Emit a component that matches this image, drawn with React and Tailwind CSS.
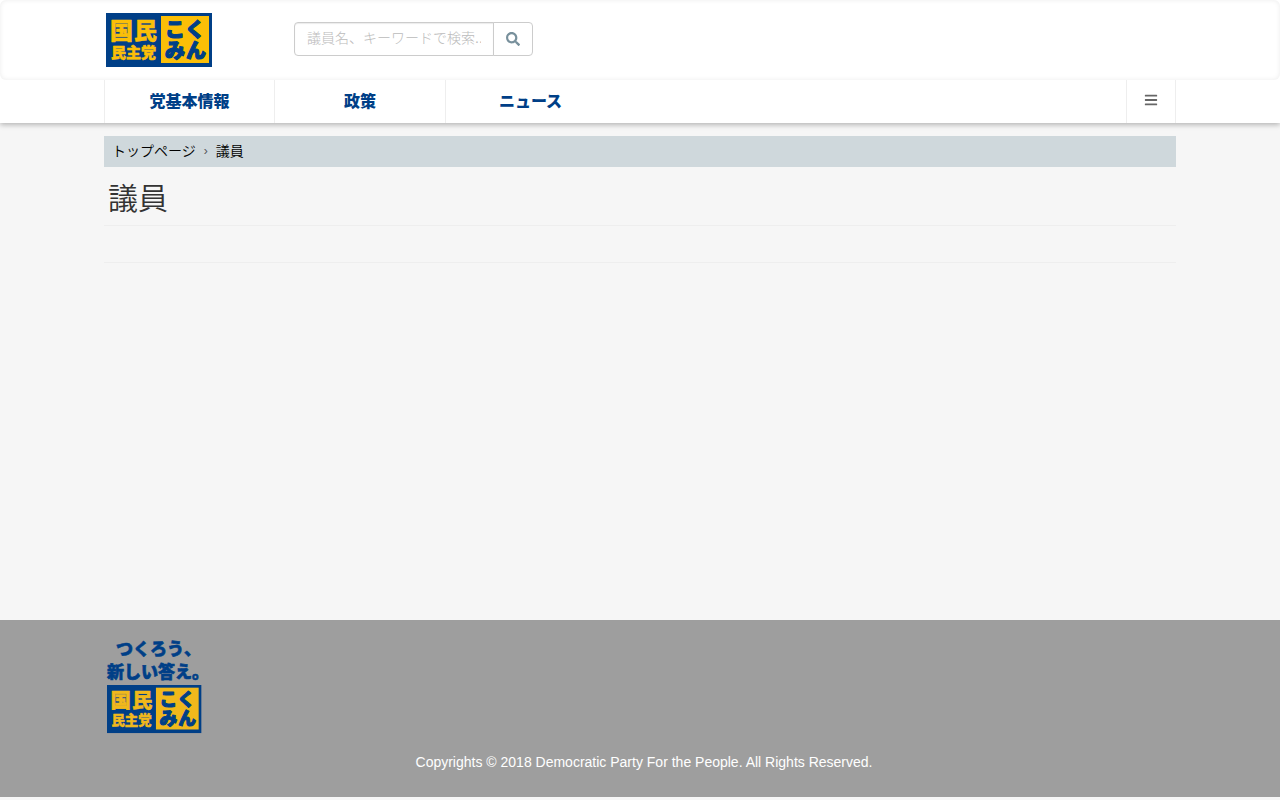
import { FaBars, FaSearch } from 'react-icons/fa';

const navItems = ['党基本情報', '政策', 'ニュース'];

function LogoMark({ yellow }) {
  return (
    <g fontWeight="900" strokeLinejoin="round">
      <rect width="106" height="54" fill="#003f87" />
      <rect x="55" y="3" width="48" height="47" fill={yellow} />
      <g fill={yellow} stroke={yellow} strokeWidth="0.5">
        <text x="4" y="26" fontSize="23">国</text>
        <text x="28" y="26" fontSize="23">民</text>
        <text x="5" y="45" fontSize="15">民主党</text>
      </g>
      <g fill="#003f87" stroke="#003f87" strokeWidth="1.2" fontSize="20">
        <text x="59" y="24">こ</text>
        <text x="79" y="24">く</text>
        <text x="59" y="45">み</text>
        <text x="80" y="45">ん</text>
      </g>
    </g>
  );
}

function Header() {
  return (
    <header className="relative bg-white shadow-[0_2px_5px_rgba(0,0,0,0.26)]">
      <div className="rounded-md shadow-[inset_0_0_5px_rgba(0,0,0,0.08)]">
        <div className="mx-26 flex h-20 items-center">
          <a href="#" aria-label="国民民主党" className="ml-0.5">
            <svg width="106" height="54" viewBox="0 0 106 54" className="block">
              <LogoMark yellow="#fbbf07" />
            </svg>
          </a>
          <form className="mb-0.5 ml-[82px] flex h-[34px]" onSubmit={(e) => e.preventDefault()}>
            <input
              type="text"
              aria-label="検索"
              placeholder="議員名、キーワードで検索..."
              className="w-[200px] rounded-l border border-[#ccc] bg-white px-3 pb-0.5 text-sm font-light shadow-[inset_0_1px_1px_rgba(0,0,0,0.08)] outline-none placeholder:text-[#bbb]"
            />
            <button
              type="submit"
              aria-label="検索する"
              className="-ml-px flex w-10 items-center justify-center rounded-r border border-[#ccc] bg-white text-sm text-[#78909c]"
            >
              <FaSearch />
            </button>
          </form>
        </div>
      </div>

      <nav className="mx-26 flex h-[43px] border-x border-[#eee]">
        {navItems.map((item) => (
          <a
            key={item}
            href="#"
            className="flex w-[171px] items-center justify-center border-r border-[#eee] text-base font-black text-[#003f87] first:w-[170px] last-of-type:w-[169px] last-of-type:border-r-0"
          >
            {item}
          </a>
        ))}
        <button
          type="button"
          aria-label="メニュー"
          className="ml-auto flex w-[49px] items-center justify-center border-l border-[#eee] pb-1 text-sm text-[#666]"
        >
          <FaBars />
        </button>
      </nav>
    </header>
  );
}

function Footer() {
  return (
    <footer className="mb-[3px] bg-[#9e9e9e] px-26 pt-[18px] pb-[25px]">
      <a href="#" aria-label="つくろう、新しい答え。" className="flex w-fit">
        <svg width="104" height="96" viewBox="0 0 104 96" className="block">
          <g fill="#003f87" stroke="#003f87" strokeWidth="0.6" fontWeight="900" fontSize="17">
            <text x="12" y="17">つくろう、</text>
            <text x="3" y="40">新しい答え。</text>
          </g>
          <g transform="translate(3 47) scale(0.89)">
            <LogoMark yellow="#f0b81c" />
          </g>
        </svg>
      </a>
      <p className="mt-[18px] pl-2 text-center text-sm leading-5 text-white">
        Copyrights © 2018 Democratic Party For the People. All Rights Reserved.
      </p>
    </footer>
  );
}

export default function App() {
  return (
    <div className="flex min-h-screen flex-col bg-[#f6f6f6] font-['Liberation_Sans','Noto_Sans_CJK_JP',sans-serif] text-[#333]">
      <Header />
      <main className="mx-26 grow pt-[13px]">
        <nav aria-label="パンくず" className="flex h-[31px] items-center bg-[#cfd8dc] px-2 pb-0.5 text-sm font-[350] text-black">
          <a href="#">トップページ</a>
          <span className="mx-2 text-xs text-[#555]">›</span>
          <span>議員</span>
        </nav>
        <h1 className="flex h-[59px] items-center border-b border-[#eee] px-1 pt-1.5 text-3xl font-[350]">
          議員
        </h1>
        <hr className="mt-9 border-[#eee]" />
      </main>
      <Footer />
    </div>
  );
}
